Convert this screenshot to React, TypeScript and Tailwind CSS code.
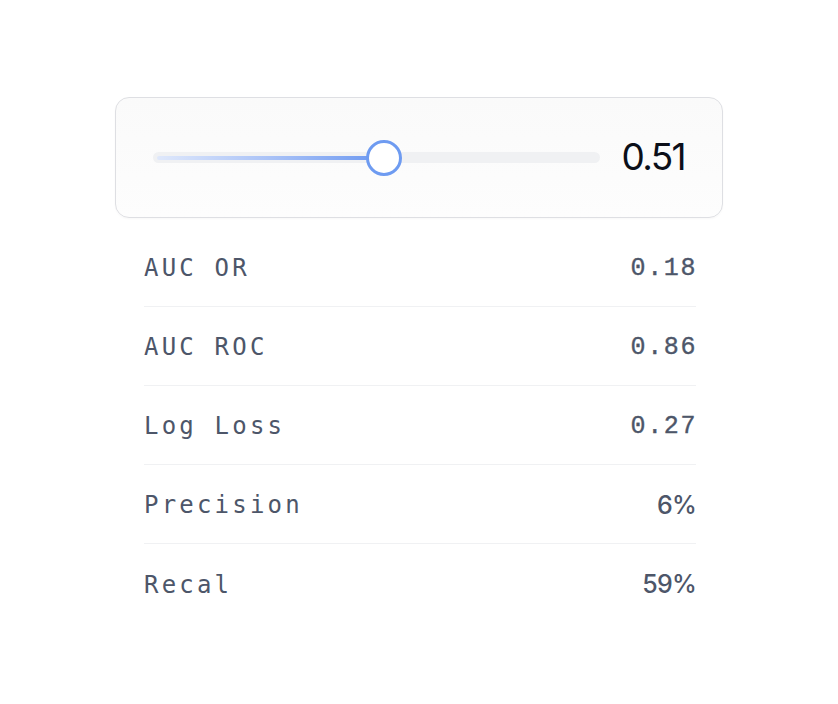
import React from "react";

const rows: { label: string; value: string; mono: boolean }[] = [
  { label: "AUC OR", value: "0.18", mono: true },
  { label: "AUC ROC", value: "0.86", mono: true },
  { label: "Log Loss", value: "0.27", mono: true },
  { label: "Precision", value: "6%", mono: false },
  { label: "Recal", value: "59%", mono: false },
];

export default function App() {
  const pct = 51.7;
  return (
    <div className="min-h-[704px] w-full bg-white flex justify-center pt-[97px]">
      <div className="w-[608px] flex flex-col">
        <div className="h-[121px] rounded-[14px] border border-[#dedfe3] bg-gradient-to-b from-[#fafafa] to-[#fdfdfd] shadow-[0_1px_2px_rgba(0,0,0,0.03)] flex items-center pl-[37px] pr-[37px] gap-[22px]">
          <div className="relative flex-1 h-[11px] rounded-full bg-[#f0f1f3]">
            <div
              className="absolute left-[4px] top-[3.5px] h-[4px] rounded-full bg-gradient-to-r from-[#dfe8fb] via-[#a9c2f7] to-[#6b97f0]"
              style={{ width: `calc(${pct}% - 4px)` }}
            />
            <div
              className="absolute top-1/2 w-[36px] h-[36px] -translate-x-1/2 -translate-y-1/2 rounded-full border-[3px] border-[#6e9bf1] bg-white"
              style={{ left: `${pct}%` }}
            />
          </div>
          <div
            className="text-[37px] leading-none tracking-[-0.045em] text-[#0b0f19] pb-[2px]"
            style={{ fontFamily: "Inter, 'Liberation Sans', sans-serif" }}
          >
            0.51
          </div>
        </div>
        <div className="mt-[10px] pl-[29px] pr-[27px] flex flex-col">
          {rows.map((r, i) => (
            <div
              key={r.label}
              className={`h-[79px] flex items-center justify-between text-[#4d5669] ${
                i < rows.length - 1 ? "border-b border-[#f0f1f3]" : ""
              }`}
            >
              <span
                className="text-[24px] tracking-[3.2px] leading-none pt-[2px]"
                style={{ fontFamily: "'DejaVu Sans Mono', 'Liberation Mono', monospace" }}
              >
                {r.label}
              </span>
              {r.mono ? (
                <span
                  className="text-[25px] tracking-[1.6px] leading-none -mr-[1px] [-webkit-text-stroke:0.35px_#4d5669] pt-[2px]"
                  style={{ fontFamily: "'Liberation Mono', 'DejaVu Sans Mono', monospace" }}
                >
                  {r.value}
                </span>
              ) : (
                <span
                  className="text-[25px] font-medium tracking-[-0.03em] leading-none pt-[2px]"
                  style={{ fontFamily: "Inter, 'Liberation Sans', sans-serif" }}
                >
                  {r.value}
                </span>
              )}
            </div>
          ))}
        </div>
      </div>
    </div>
  );
}
